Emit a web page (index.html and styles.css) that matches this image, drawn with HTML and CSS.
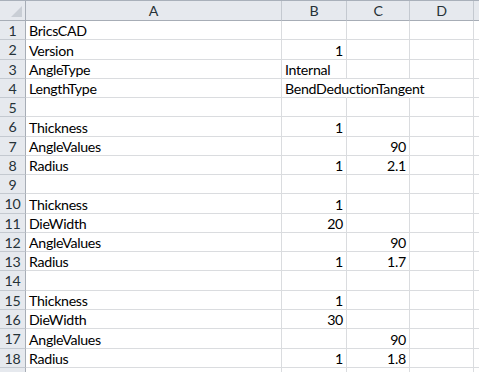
FILE: index.html
```html
<!DOCTYPE html>
<html lang="en">
<head>
    <meta charset="UTF-8">
    <meta name="viewport" content="width=device-width, initial-scale=1.0">
    <title>Bend table</title>
    <link rel="stylesheet" href="styles.css">
</head>
<body>
    <div class="sheet">
        <!-- column headers -->
        <div class="row head-row">
            <div class="corner">
                <svg width="11" height="11" viewBox="0 0 11 11"><polygon points="11,0 11,11 0,11" fill="#c9ced5"/></svg>
            </div>
            <div class="col-head">A</div>
            <div class="col-head">B</div>
            <div class="col-head">C</div>
            <div class="col-head">D</div>
            <div class="col-head last"></div>
        </div>

        <div class="row"><div class="row-head">1</div><div class="cell">BricsCAD</div><div class="cell"></div><div class="cell"></div><div class="cell"></div><div class="cell"></div></div>
        <div class="row"><div class="row-head">2</div><div class="cell">Version</div><div class="cell num">1</div><div class="cell"></div><div class="cell"></div><div class="cell"></div></div>
        <div class="row"><div class="row-head">3</div><div class="cell">AngleType</div><div class="cell">Internal</div><div class="cell"></div><div class="cell"></div><div class="cell"></div></div>
        <div class="row"><div class="row-head">4</div><div class="cell">LengthType</div><div class="cell spill">BendDeductionTangent</div><div class="cell spill"></div><div class="cell"></div><div class="cell"></div></div>
        <div class="row"><div class="row-head">5</div><div class="cell"></div><div class="cell"></div><div class="cell"></div><div class="cell"></div><div class="cell"></div></div>
        <div class="row"><div class="row-head">6</div><div class="cell">Thickness</div><div class="cell num">1</div><div class="cell"></div><div class="cell"></div><div class="cell"></div></div>
        <div class="row"><div class="row-head">7</div><div class="cell">AngleValues</div><div class="cell"></div><div class="cell num">90</div><div class="cell"></div><div class="cell"></div></div>
        <div class="row"><div class="row-head">8</div><div class="cell">Radius</div><div class="cell num">1</div><div class="cell num">2.1</div><div class="cell"></div><div class="cell"></div></div>
        <div class="row"><div class="row-head">9</div><div class="cell"></div><div class="cell"></div><div class="cell"></div><div class="cell"></div><div class="cell"></div></div>
        <div class="row"><div class="row-head">10</div><div class="cell">Thickness</div><div class="cell num">1</div><div class="cell"></div><div class="cell"></div><div class="cell"></div></div>
        <div class="row"><div class="row-head">11</div><div class="cell">DieWidth</div><div class="cell num">20</div><div class="cell"></div><div class="cell"></div><div class="cell"></div></div>
        <div class="row"><div class="row-head">12</div><div class="cell">AngleValues</div><div class="cell"></div><div class="cell num">90</div><div class="cell"></div><div class="cell"></div></div>
        <div class="row"><div class="row-head">13</div><div class="cell">Radius</div><div class="cell num">1</div><div class="cell num">1.7</div><div class="cell"></div><div class="cell"></div></div>
        <div class="row"><div class="row-head">14</div><div class="cell"></div><div class="cell"></div><div class="cell"></div><div class="cell"></div><div class="cell"></div></div>
        <div class="row"><div class="row-head">15</div><div class="cell">Thickness</div><div class="cell num">1</div><div class="cell"></div><div class="cell"></div><div class="cell"></div></div>
        <div class="row"><div class="row-head">16</div><div class="cell">DieWidth</div><div class="cell num">30</div><div class="cell"></div><div class="cell"></div><div class="cell"></div></div>
        <div class="row"><div class="row-head">17</div><div class="cell">AngleValues</div><div class="cell"></div><div class="cell num">90</div><div class="cell"></div><div class="cell"></div></div>
        <div class="row"><div class="row-head">18</div><div class="cell">Radius</div><div class="cell num">1</div><div class="cell num">1.8</div><div class="cell"></div><div class="cell"></div></div>
        <div class="row"><div class="row-head"></div><div class="cell"></div><div class="cell"></div><div class="cell"></div><div class="cell"></div><div class="cell"></div></div>
    </div>
</body>
</html>
```

FILE: styles.css
```css
body {
    margin: 0;
    background: #ffffff;
    font-family: Lato, "Open Sans", sans-serif;
    font-size: 14.2px;
    letter-spacing: -0.3px;
    color: #000000;
    overflow: hidden;
}

.sheet {
    display: flex;
    flex-direction: column;
    width: 479px;
    height: 372px;
    overflow: hidden;
    background: #ffffff;
}

/* every row shares the same column widths */
.row {
    display: grid;
    grid-template-columns: 26px 256px 65px 63px 64px 1fr;
    height: 19.28px;
    flex: none;
}

.head-row {
    height: 21px;
    border-top: 1px solid #a9b0ba;
    box-sizing: border-box;
    background: #e6e9ee;
}

.corner {
    display: flex;
    align-items: flex-end;
    justify-content: flex-end;
    padding: 0 3px 3px 0;
    border-right: 1px solid #a7adb6;
    border-bottom: 1px solid #a7adb6;
}

.col-head {
    display: flex;
    align-items: center;
    justify-content: center;
    color: #263238;
    border-right: 1px solid #c4c9d0;
    border-bottom: 1px solid #a7adb6;
}

.col-head.last {
    border-right: none;
}

.row-head {
    background: #e6e9ee;
    color: #263238;
    text-align: center;
    line-height: 17px;
    padding-top: 1px;
    border-right: 1px solid #a7adb6;
    border-bottom: 1px solid #c4c9d0;
}

/* plain worksheet cell, bottom aligned like the spreadsheet default */
.cell {
    display: flex;
    align-items: flex-end;
    padding: 0 3px;
    line-height: 17px;
    white-space: nowrap;
    border-right: 1px solid #dadcdf;
    border-bottom: 1px solid #dadcdf;
    min-width: 0;
}

.cell.num {
    justify-content: flex-end;
}

.cell.spill {
    border-right-color: transparent;
    overflow: visible;
}
```
